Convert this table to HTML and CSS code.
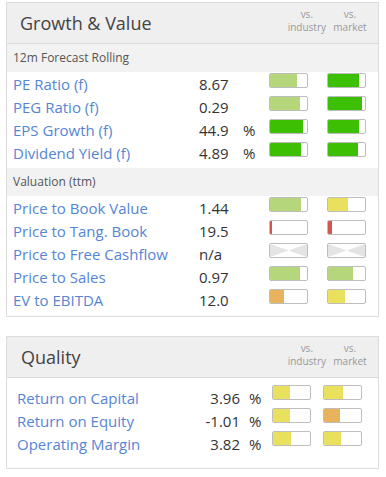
FILE: index.html
```html
<!DOCTYPE html>
<html>
<head>
<meta charset="utf-8">
<link rel="stylesheet" href="styles.css">
</head>
<body>
<section class="panel gv">
  <header class="panel-head">
    <h2 class="title">Growth &amp; Value</h2>
    <div class="vs">vs.<br>industry</div>
    <div class="vs">vs.<br>market</div>
  </header>
  <div class="band">12m Forecast Rolling</div>
  <div class="rows">
    <div class="row"><a class="label">PE Ratio (f)</a><span class="val">8.67</span><span class="pct"></span>
      <span class="bar"><span class="fill lg" style="width:72%"></span></span><span class="bar"><span class="fill g" style="width:84%"></span></span></div>
    <div class="row"><a class="label">PEG Ratio (f)</a><span class="val">0.29</span><span class="pct"></span>
      <span class="bar"><span class="fill lg" style="width:80%"></span></span><span class="bar"><span class="fill g" style="width:92%"></span></span></div>
    <div class="row"><a class="label">EPS Growth (f)</a><span class="val">44.9</span><span class="pct">%</span>
      <span class="bar"><span class="fill g" style="width:88%"></span></span><span class="bar"><span class="fill g" style="width:84%"></span></span></div>
    <div class="row"><a class="label">Dividend Yield (f)</a><span class="val">4.89</span><span class="pct">%</span>
      <span class="bar"><span class="fill g" style="width:85%"></span></span><span class="bar"><span class="fill g" style="width:82%"></span></span></div>
  </div>
  <div class="band">Valuation (ttm)</div>
  <div class="rows">
    <div class="row"><a class="label">Price to Book Value</a><span class="val">1.44</span><span class="pct"></span>
      <span class="bar"><span class="fill lg" style="width:83%"></span></span><span class="bar"><span class="fill y" style="width:55%"></span></span></div>
    <div class="row"><a class="label">Price to Tang. Book</a><span class="val">19.5</span><span class="pct"></span>
      <span class="bar"><span class="fill r" style="width:6%"></span></span><span class="bar"><span class="fill r" style="width:10%"></span></span></div>
    <div class="row"><a class="label">Price to Free Cashflow</a><span class="val">n/a</span><span class="pct"></span>
      <span class="bar na"><svg viewBox="0 0 37 13" preserveAspectRatio="none"><polygon points="0,0 18.5,6.5 0,13" /><polygon points="37,0 18.5,6.5 37,13" /></svg></span>
      <span class="bar na"><svg viewBox="0 0 37 13" preserveAspectRatio="none"><polygon points="0,0 18.5,6.5 0,13" /><polygon points="37,0 18.5,6.5 37,13" /></svg></span></div>
    <div class="row"><a class="label">Price to Sales</a><span class="val">0.97</span><span class="pct"></span>
      <span class="bar"><span class="fill lg" style="width:80%"></span></span><span class="bar"><span class="fill lg" style="width:68%"></span></span></div>
    <div class="row"><a class="label">EV to EBITDA</a><span class="val">12.0</span><span class="pct"></span>
      <span class="bar"><span class="fill o" style="width:39%"></span></span><span class="bar"><span class="fill y" style="width:47%"></span></span></div>
  </div>
</section>

<section class="panel q">
  <header class="panel-head">
    <h2 class="title">Quality</h2>
    <div class="vs">vs.<br>industry</div>
    <div class="vs">vs.<br>market</div>
  </header>
  <div class="rows">
    <div class="row"><a class="label">Return on Capital</a><span class="val">3.96</span><span class="pct">%</span>
      <span class="bar"><span class="fill y" style="width:46%"></span></span><span class="bar"><span class="fill y" style="width:51%"></span></span></div>
    <div class="row"><a class="label">Return on Equity</a><span class="val">-1.01</span><span class="pct">%</span>
      <span class="bar"><span class="fill y" style="width:46%"></span></span><span class="bar"><span class="fill o" style="width:43%"></span></span></div>
    <div class="row"><a class="label">Operating Margin</a><span class="val">3.82</span><span class="pct">%</span>
      <span class="bar"><span class="fill y" style="width:49%"></span></span><span class="bar"><span class="fill y" style="width:46%"></span></span></div>
  </div>
</section>
</body>
</html>
```

FILE: styles.css
```css
* { box-sizing: border-box; }
body {
  margin: 0;
  padding: 2px 7px 0 6px;
  background: #fff;
  font-family: "Open Sans", "Liberation Sans", sans-serif;
  color: #333;
}
.panel {
  border: 1px solid #dcdcdc;
  background: #fff;
}
.panel.q {
  margin-top: 19px;
  padding-bottom: 15px;
}
.panel.gv {
  padding-bottom: 5px;
}
.panel-head {
  display: flex;
  align-items: flex-start;
  height: 41px;
  background: #efefef;
  border-bottom: 1px solid #dcdcdc;
}
.title {
  flex: 1;
  margin: 0;
  padding-left: 13px;
  font-size: 18px;
  font-weight: 400;
  line-height: 40px;
  color: #444;
}
.q .title { padding-left: 14px; }
.vs {
  font-size: 10px;
  line-height: 12.5px;
  color: #999;
  text-align: center;
  padding-top: 5px;
}
.vs:nth-of-type(2) { width: 48px; margin-right: 4px; }
.vs:nth-of-type(3) { width: 38px; margin-right: 9px; }
.band {
  height: 28px;
  line-height: 28px;
  background: #f2f2f2;
  font-size: 12px;
  color: #555;
  padding-left: 6px;
}
.rows + .band { margin-top: 4px; }
.q .rows { padding-top: 6px; }
.row {
  display: grid;
  grid-template-columns: 186px 44px 26px 39px 58px;
  height: 23px;
  padding-left: 6px;
  align-items: center;
}
.gv .row .bar:last-child { margin-left: 19px; }
.q .row {
  padding-left: 10px;
  grid-template-columns: 170px 53px 32px 39px 51px;
}
.q .row .bar:last-child { margin-left: 12px; }
.q .row .label, .q .row .val, .q .row .pct { padding-top: 4px; }
.label {
  font-size: 15px;
  color: #5585d6;
  text-decoration: none;
  white-space: nowrap;
}
.val {
  font-size: 15px;
  color: #333;
}
.q .val { text-align: right; }
.pct {
  font-size: 15px;
  color: #333;
}
.q .pct { padding-left: 9px; }
.bar {
  align-self: start;
  margin-top: 1px;
  display: block;
  width: 39px;
  height: 15px;
  border: 1px solid #bdbdbd;
  border-radius: 2px;
  background: #fff;
  overflow: hidden;
}
.fill { display: block; height: 100%; }
.fill.lg { background: #b6d67c; }
.fill.g { background: #3dbf03; }
.fill.y { background: #e9e05e; }
.fill.o { background: #e9b25c; }
.fill.r { background: #d65451; }
.bar.na svg { display: block; width: 100%; height: 100%; }
.bar.na polygon { fill: #e4e4e4; }
```
